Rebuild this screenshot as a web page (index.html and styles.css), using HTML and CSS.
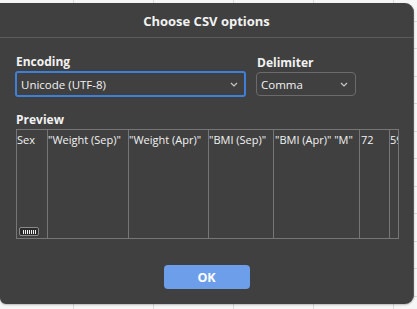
FILE: index.html
```html
<!DOCTYPE html>
<html lang="en">
<head>
    <meta charset="UTF-8">
    <title>Choose CSV options</title>
    <link rel="stylesheet" href="styles.css">
</head>
<body>
    <div class="dialog">
        <div class="dialog-title">Choose CSV options</div>
        <div class="dialog-body">
            <div class="field-row">
                <div class="field field-encoding">
                    <label class="field-label">Encoding</label>
                    <div class="select select-focus">
                        <span>Unicode (UTF-8)</span>
                        <svg class="chevron" width="8" height="5" viewBox="0 0 8 5"><polyline points="1,1 4,4 7,1" fill="none" stroke="#c8c8c8" stroke-width="1.2"/></svg>
                    </div>
                </div>
                <div class="field field-delimiter">
                    <label class="field-label">Delimiter</label>
                    <div class="select">
                        <span>Comma</span>
                        <svg class="chevron" width="8" height="5" viewBox="0 0 8 5"><polyline points="1,1 4,4 7,1" fill="none" stroke="#c8c8c8" stroke-width="1.2"/></svg>
                    </div>
                </div>
            </div>

            <div class="field-label preview-label">Preview</div>
            <div class="preview">
                <div class="cell c1">
                    <span>Sex</span>
                    <div class="handle"><i></i><i></i><i></i><i></i><i></i><i></i><i></i></div>
                </div>
                <div class="cell c2">"Weight (Sep)"</div>
                <div class="cell c3">"Weight (Apr)"</div>
                <div class="cell c4">"BMI (Sep)"</div>
                <div class="cell c5">"BMI (Apr)" "M"</div>
                <div class="cell c6">72</div>
                <div class="cell c7">59</div>
            </div>

            <div class="actions">
                <button class="ok-btn">OK</button>
            </div>
        </div>
    </div>
</body>
</html>
```

FILE: styles.css
```css
* {
    box-sizing: border-box;
    margin: 0;
    padding: 0;
}

body {
    font-family: 'Open Sans', 'Noto Sans', sans-serif;
    width: 417px;
    height: 309px;
    overflow: hidden;
    background-color: #f6f6f6;
    background-image:
        repeating-linear-gradient(90deg, transparent 0 73px, #dadada 73px 74px, transparent 74px 80px),
        repeating-linear-gradient(180deg, transparent 0 21px, #dadada 21px 22px, transparent 22px 27.5px);
    color: #f2f2f2;
}

.dialog {
    width: 414px;
    height: 301px;
    margin-top: 3px;
    background-color: #404040;
    border-radius: 0 9px 9px 6px;
    border-right: 1px solid #575757;
    box-shadow: 0 1px 2px rgba(0, 0, 0, 0.25);
    display: flex;
    flex-direction: column;
}

.dialog-title {
    height: 35px;
    padding-top: 2px;
    border-bottom: 1px solid #5c5c5c;
    text-align: center;
    font-size: 13px;
    font-weight: 700;
    line-height: 33px;
}

.dialog-body {
    padding: 0 15px;
    flex: 1;
    display: flex;
    flex-direction: column;
}

.field-row {
    display: flex;
    align-items: flex-end;
    gap: 10px;
    margin-top: 16px;
}

.field-label {
    display: block;
    font-size: 12px;
    font-weight: 700;
    line-height: 16px;
    padding-left: 1px;
    margin-bottom: 1px;
}

.field-encoding {
    width: 231px;
}

.field-delimiter {
    width: 100px;
}

.select {
    display: flex;
    align-items: center;
    justify-content: space-between;
    height: 24px;
    border: 1px solid #6b6b6b;
    border-radius: 4px;
    padding: 0 7px 0 4px;
    font-size: 11.5px;
    margin-bottom: 1px;
}

.select-focus {
    height: 26px;
    border: 2px solid #3d7fd9;
    border-radius: 3px;
    padding: 0 6px 0 4px;
    margin-bottom: 0;
}

.preview-label {
    margin-top: 15px;
}

.preview {
    display: flex;
    height: 110px;
    width: 383px;
    margin-left: 1px;
    border: 1px solid #767676;
    overflow: hidden;
    font-size: 11px;
    line-height: 20px;
}

.cell {
    flex: none;
    padding-left: 0;
    border-right: 1px solid #767676;
    white-space: nowrap;
    overflow: hidden;
}

.c1 { width: 31px; display: flex; flex-direction: column; }
.c2 { width: 81px; }
.c3 { width: 80px; }
.c4 { width: 65px; }
.c5 { width: 86px; padding-left: 1px; }
.c6 { width: 30px; padding-left: 1px; }
.c7 { width: 8px; border-right: none; }

.handle {
    margin: auto 0 2px 2px;
    width: 20px;
    height: 9px;
    border: 1px solid #8a8a8a;
    border-radius: 2px;
    background-color: #2b2b2b;
    display: flex;
    justify-content: center;
    align-items: center;
    gap: 1px;
}

.handle i {
    width: 1px;
    height: 4px;
    background-color: #f0f0f0;
}

.actions {
    display: flex;
    justify-content: center;
    margin-top: 26px;
}

.ok-btn {
    width: 86px;
    height: 24px;
    border: none;
    border-radius: 4px;
    background-color: #6d9eea;
    color: #ffffff;
    font-family: inherit;
    font-size: 12.5px;
    font-weight: 700;
}
```
